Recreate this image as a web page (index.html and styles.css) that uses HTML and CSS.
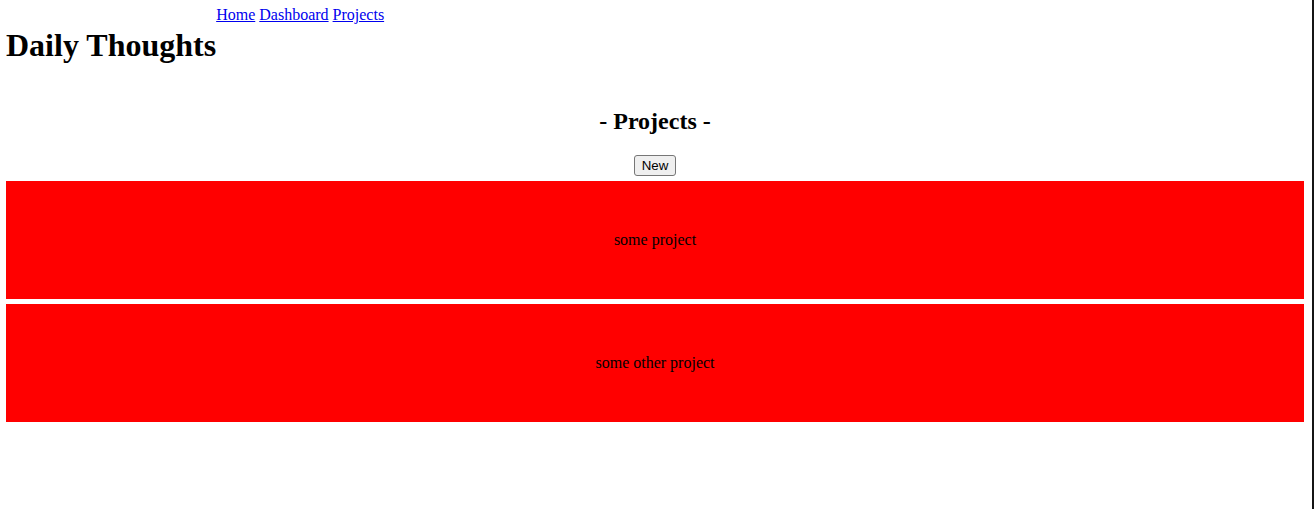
FILE: index.html
```html
<!DOCTYPE html>
<html>
<head>
<meta charset="utf-8">
<title>Daily Thoughts</title>
<link rel="stylesheet" href="styles.css">
</head>
<body>
<header class="site-header">
  <h1 class="site-title">Daily Thoughts</h1>
  <nav class="site-nav">
    <a href="#">Home</a>
    <a href="#">Dashboard</a>
    <a href="#">Projects</a>
  </nav>
</header>
<main class="projects">
  <h2 class="projects-title">- Projects -</h2>
  <div class="projects-actions">
    <button class="btn-new" type="button">New</button>
  </div>
  <div class="project-list">
    <div class="project-card">some project</div>
    <div class="project-card">some other project</div>
  </div>
</main>
</body>
</html>
```

FILE: styles.css
```css
html {
  border-right: 2px solid #151515;
  min-height: 100%;
  box-sizing: border-box;
  background: #fff;
}
body {
  margin: 6px 8px 6px 6px;
  font-family: "Liberation Serif", "Times New Roman", serif;
  font-size: 16px;
  color: #000;
}
.site-header {
  display: flex;
  align-items: flex-start;
}
.site-title {
  margin: 21px 0 0;
  font-size: 32px;
  font-weight: bold;
  line-height: 37px;
}
.site-nav {
  line-height: 18px;
}
.site-nav a {
  color: #0000ee;
}
.projects {
  display: flex;
  flex-direction: column;
}
.projects-title {
  margin: 43px 0 0;
  text-align: center;
  font-size: 24px;
  line-height: 28px;
}
.projects-actions {
  margin-top: 20px;
  display: flex;
  justify-content: center;
}
.btn-new {
  font-family: "Liberation Sans", Arial, sans-serif;
  font-size: 13.33px;
  height: 21px;
  padding: 1px 7px;
  border: 1px solid #767676;
  border-radius: 3px;
  background: #efefef;
  color: #000;
}
.project-list {
  margin-top: 5px;
  display: flex;
  flex-direction: column;
  gap: 5px;
}
.project-card {
  height: 118px;
  background: #ff0000;
  display: flex;
  align-items: center;
  justify-content: center;
}
```
